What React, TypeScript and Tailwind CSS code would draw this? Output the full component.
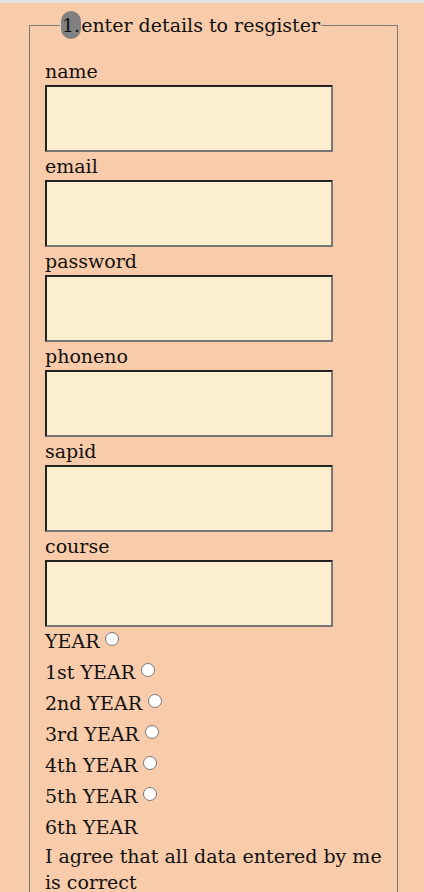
export default function App() {
  const fields = ["name", "email", "password", "phoneno", "sapid", "course"];
  const years = ["YEAR", "1st YEAR", "2nd YEAR", "3rd YEAR", "4th YEAR", "5th YEAR"];

  return (
    <div className="min-h-[892px] bg-[#f8cbaa] font-['DejaVu_Serif',serif] text-[19px] text-[#111]">
      <div className="h-[3px] bg-[#e4e4e4]" />
      <fieldset className="ml-[29px] mt-[8px] w-[369px] border border-[#7c7c7c] pl-[15px] pb-4">
        <legend className="ml-[15px] px-[1px] leading-[28px]">
          <span className="rounded-full bg-[#808080] px-[1px] py-[3px]">1.</span>
          enter details to resgister
        </legend>

        <div className="mt-[18px] flex flex-col">
          {fields.map((f) => (
            <div key={f} className="flex flex-col">
              <label className="h-[28px] leading-[28px]">{f}</label>
              <input
                type="text"
                className="h-[67px] w-[288px] border-2 border-t-[#222] border-l-[#222] border-b-[#777] border-r-[#777] bg-[#fcefcd] outline-none"
              />
            </div>
          ))}
        </div>

        <div className="-mt-[1px] flex flex-col">
          {years.map((y) => (
            <div key={y} className="flex h-[31px] items-center">
              <span>{y}</span>
              <span className="-mt-[6px] ml-[6px] h-[14px] w-[14px] shrink-0 rounded-full border border-[#777] bg-white" />
            </div>
          ))}
          <div className="flex h-[31px] items-center">6th YEAR</div>
          <p className="leading-[26px]">
            I agree that all data entered by me
            <br />
            is correct
          </p>
        </div>
      </fieldset>
    </div>
  );
}
